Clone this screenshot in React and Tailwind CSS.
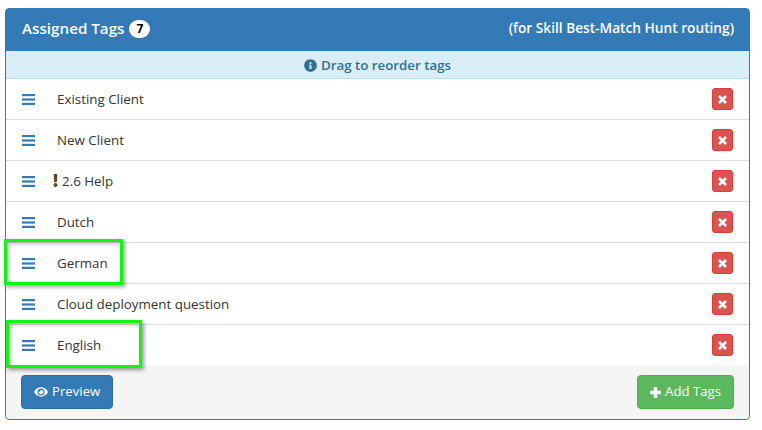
import React from "react";
import { FaEye, FaInfoCircle, FaExclamation } from "react-icons/fa";

const tags = [
  { name: "Existing Client" },
  { name: "New Client" },
  { name: "2.6 Help", warn: true },
  { name: "Dutch" },
  { name: "German", box: "w-[119px] h-[46px] -top-[4px] left-[-2px]" },
  { name: "Cloud deployment question" },
  { name: "English", box: "w-[136px] h-[48px] -top-[5px] left-[0px]" },
];

function BarsIcon() {
  return (
    <svg width="13" height="11" viewBox="0 0 13 11" className="shrink-0 text-[#337ab7]" fill="currentColor">
      <rect x="0" y="0" width="13" height="2.2" />
      <rect x="0" y="4.4" width="13" height="2.2" />
      <rect x="0" y="8.8" width="13" height="2.2" />
    </svg>
  );
}

function CrossIcon() {
  return (
    <svg width="9" height="9" viewBox="0 0 9 9" stroke="currentColor" strokeWidth="2.6">
      <path d="M1 1 L8 8 M8 1 L1 8" />
    </svg>
  );
}

function PlusIcon() {
  return (
    <svg width="11" height="11" viewBox="0 0 11 11" fill="currentColor">
      <path d="M3.8 0h3.4v3.8H11v3.4H7.2V11H3.8V7.2H0V3.8h3.8z" />
    </svg>
  );
}

function TagRow({ tag, last }) {
  return (
    <div className={`relative flex items-center pl-[16px] pr-[16px] ${last ? "h-[40px]" : "h-[41px] border-b border-[#ddd]"}`}>
      <BarsIcon />
      {tag.warn ? (
        <span className="flex items-center ml-[18px] text-[13.35px] text-[#333]">
          <FaExclamation className="text-[#5f4a20] text-[13px] w-[5px] mr-[4px]" />
          {tag.name}
        </span>
      ) : (
        <span className="ml-[22px] text-[13.35px] text-[#333]">{tag.name}</span>
      )}
      <button className="ml-auto flex items-center justify-center w-[21px] h-[22px] rounded-[3px] bg-[#d9534f] border border-[#d43f3a] text-white">
        <CrossIcon />
      </button>
      {tag.box && (
        <div className={`absolute border-[3px] border-[#11f511] shadow-[2px_2px_4px_rgba(0,0,0,0.4),inset_2px_2px_4px_rgba(0,0,0,0.25)] ${tag.box}`} />
      )}
    </div>
  );
}

export default function App() {
  return (
    <div className="w-[762px] h-[430px] bg-white pt-[8px] pl-[5px] font-['Open_Sans',sans-serif]">
      <div className="w-[745px] rounded-[4px] border border-[#337ab7] bg-white">
        {/* Heading */}
        <div className="flex justify-between items-center h-[42px] bg-[#337ab7] text-white pl-[16px] pr-[15px]">
          <div className="flex items-center font-semibold text-[15.2px] -mt-[3px]">
            Assigned Tags
            <span className="ml-[5px] mt-[2px] flex items-center justify-center w-[21px] h-[18px] rounded-full bg-white text-black text-[12px] font-bold">
              7
            </span>
          </div>
          <div className="font-semibold text-[13.7px] -mt-[3px]">(for Skill Best-Match Hunt routing)</div>
        </div>

        {/* Info bar */}
        <div className="flex items-center justify-center gap-[4px] h-[28px] pt-[2px] bg-[#d9edf7] border-b border-[#bcdde8] text-[#31708f] font-semibold text-[13.3px]">
          <FaInfoCircle className="text-[13px]" />
          Drag to reorder tags
        </div>

        {tags.map((tag, i) => (
          <TagRow key={tag.name} tag={tag} last={i === tags.length - 1} />
        ))}

        {/* Footer */}
        <div className="flex justify-between items-center h-[54px] bg-[#f5f5f5] pl-[15px] pr-[15px] rounded-b-[4px]">
          <button className="flex items-center gap-[4px] h-[34px] px-[12px] rounded-[4px] bg-[#337ab7] border border-[#2e6da4] text-white text-[13.2px]">
            <FaEye className="text-[14px]" />
            Preview
          </button>
          <button className="flex items-center gap-[4px] h-[34px] px-[12px] rounded-[4px] bg-[#5cb85c] border border-[#4cae4c] text-white text-[13.2px]">
            <PlusIcon />
            Add Tags
          </button>
        </div>
      </div>
    </div>
  );
}
